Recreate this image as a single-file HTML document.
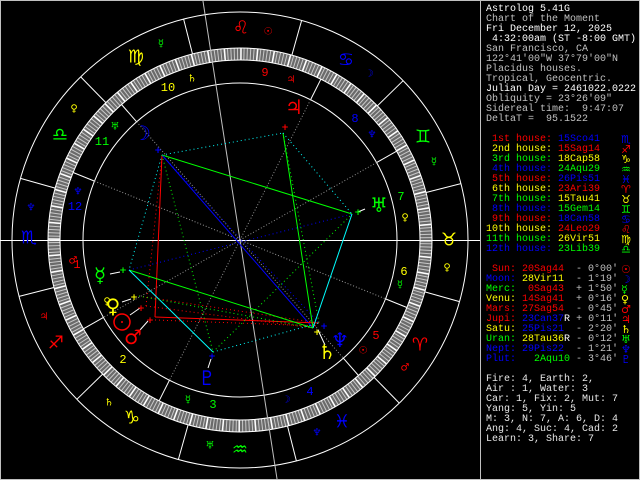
<!DOCTYPE html>
<html><head><meta charset="utf-8"><style>
html,body{margin:0;padding:0;background:#000}
#w{position:relative;width:640px;height:480px;background:#000;overflow:hidden}
svg{position:absolute;left:0;top:0}
#p{position:absolute;left:486px;top:5px;width:150px;font:10px/10px "Liberation Mono","DejaVu Sans Mono",monospace;color:#c0c0c0;white-space:normal}
#p div{height:10px;white-space:pre}
.w{color:#fff}.r{color:#f00}.y{color:#ff0}.g{color:#0f0}.b{color:#00f}.l{color:#e8e8e8}
.gl{position:absolute;left:135px;font-family:"DejaVu Sans",sans-serif;font-size:11px;line-height:10px}
</style></head><body><div id="w">
<svg width="640" height="480" viewBox="0 0 640 480" font-family="DejaVu Sans, sans-serif">
<rect x="0.5" y="0.5" width="639" height="479" fill="none" stroke="#c0c0c0"/>
<line x1="480.5" y1="0" x2="480.5" y2="480" stroke="#c0c0c0"/>
<g fill="none">
<circle cx="240" cy="240" r="228" stroke="#fff"/>
<circle cx="240" cy="240" r="186" stroke="#6a6a6a" stroke-width="12"/>
<circle cx="240" cy="240" r="186" stroke="#c8c8c8" stroke-width="12" stroke-dasharray="1 2.246"/>
<circle cx="240" cy="240" r="186" stroke="#fff" stroke-width="12" stroke-dasharray="1.5 14.73"/>
<circle cx="240" cy="240" r="192" stroke="#fff"/>
<circle cx="240" cy="240" r="180" stroke="#fff"/>
<circle cx="240" cy="240" r="157" stroke="#fff"/>
</g>
<g stroke="#fff">
<line x1="432" y1="240" x2="468" y2="240" transform="rotate(45.68 240 240)"/>
<line x1="432" y1="240" x2="468" y2="240" transform="rotate(15.68 240 240)"/>
<line x1="432" y1="240" x2="468" y2="240" transform="rotate(-14.32 240 240)"/>
<line x1="432" y1="240" x2="468" y2="240" transform="rotate(-44.32 240 240)"/>
<line x1="432" y1="240" x2="468" y2="240" transform="rotate(-74.32 240 240)"/>
<line x1="432" y1="240" x2="468" y2="240" transform="rotate(-104.32 240 240)"/>
<line x1="432" y1="240" x2="468" y2="240" transform="rotate(-134.32 240 240)"/>
<line x1="432" y1="240" x2="468" y2="240" transform="rotate(-164.32 240 240)"/>
<line x1="432" y1="240" x2="468" y2="240" transform="rotate(-194.32 240 240)"/>
<line x1="432" y1="240" x2="468" y2="240" transform="rotate(-224.32 240 240)"/>
<line x1="432" y1="240" x2="468" y2="240" transform="rotate(-254.32 240 240)"/>
<line x1="432" y1="240" x2="468" y2="240" transform="rotate(-284.32 240 240)"/>
<line x1="397" y1="240" x2="420" y2="240" transform="rotate(-209.55 240 240)"/>
<line x1="397" y1="240" x2="420" y2="240" transform="rotate(-243.29 240 240)"/>
<line x1="397" y1="240" x2="420" y2="240" transform="rotate(-311.17 240 240)"/>
<line x1="397" y1="240" x2="420" y2="240" transform="rotate(-337.97 240 240)"/>
<line x1="397" y1="240" x2="420" y2="240" transform="rotate(-29.55 240 240)"/>
<line x1="397" y1="240" x2="420" y2="240" transform="rotate(-63.29 240 240)"/>
<line x1="397" y1="240" x2="420" y2="240" transform="rotate(-131.17 240 240)"/>
<line x1="397" y1="240" x2="420" y2="240" transform="rotate(-157.97 240 240)"/>
</g>
<g stroke="#909090" stroke-dasharray="1 2">
<line x1="83" y1="240" x2="397" y2="240" transform="rotate(-209.55 240 240)"/>
<line x1="83" y1="240" x2="397" y2="240" transform="rotate(-243.29 240 240)"/>
<line x1="83" y1="240" x2="397" y2="240" transform="rotate(-311.17 240 240)"/>
<line x1="83" y1="240" x2="397" y2="240" transform="rotate(-337.97 240 240)"/>
</g>
<line x1="0" y1="240.5" x2="480" y2="240.5" stroke="#fff"/>
<line x1="202.5" y1="-2" x2="277.5" y2="482" stroke="#c0c0c0"/>
<g stroke-width="1" fill="none">
<line x1="162" y1="155" x2="283" y2="133" stroke="#0ff" stroke-dasharray="1 3"/>
<line x1="162" y1="155" x2="129" y2="270" stroke="#0ff" stroke-dasharray="1 3"/>
<line x1="162" y1="155" x2="352" y2="214" stroke="#0f0"/>
<line x1="162" y1="155" x2="313" y2="328" stroke="#00f"/>
<line x1="162" y1="155" x2="319" y2="323" stroke="#00f" stroke-dasharray="1 3"/>
<polyline points="162,155 155,317" stroke="#f00"/>
<line x1="155" y1="317" x2="319" y2="323" stroke="#f00"/>
<line x1="146" y1="306" x2="162" y2="155" stroke="#f00" stroke-dasharray="1 3"/>
<line x1="146" y1="306" x2="313" y2="328" stroke="#f00" stroke-dasharray="1 3"/>
<line x1="139" y1="296" x2="319" y2="323" stroke="#f00" stroke-dasharray="1 3"/>
<line x1="162" y1="155" x2="213" y2="352" stroke="#0f0" stroke-dasharray="1 3"/>
<line x1="129" y1="270" x2="313" y2="328" stroke="#0f0"/>
<line x1="129" y1="270" x2="352" y2="214" stroke="#00f" stroke-dasharray="1 3"/>
<line x1="129" y1="270" x2="213" y2="352" stroke="#0ff"/>
<line x1="283" y1="133" x2="313" y2="328" stroke="#0f0"/>
<line x1="283" y1="133" x2="319" y2="323" stroke="#0f0" stroke-dasharray="1 3"/>
<line x1="283" y1="133" x2="352" y2="214" stroke="#0ff" stroke-dasharray="1 3"/>
<line x1="352" y1="214" x2="313" y2="328" stroke="#0ff"/>
<line x1="213" y1="352" x2="319" y2="323" stroke="#0ff" stroke-dasharray="1 3"/>
<line x1="213" y1="352" x2="352" y2="214" stroke="#0f0" stroke-dasharray="1 3"/>
<line x1="139" y1="296" x2="313" y2="328" stroke="#0f0" stroke-dasharray="1 3"/>
<line x1="155" y1="320" x2="319" y2="326" stroke="#f00" stroke-dasharray="1 3"/>
</g>
<g stroke="#fff">
<line x1="110" y1="274" x2="120" y2="272"/>
<line x1="122" y1="302" x2="131" y2="299"/>
<line x1="130" y1="315" x2="140" y2="308"/>
<line x1="140" y1="330" x2="148" y2="321"/>
<line x1="318" y1="330" x2="325" y2="345"/>
<line x1="208" y1="368" x2="211" y2="359"/>
<line x1="365" y1="209" x2="358" y2="212"/>
</g>
<g font-size="9" text-anchor="middle" dominant-baseline="central" font-weight="bold">
<text x="141" y="309" fill="#f00">+</text><text x="158" y="151" fill="#00f">+</text>
<text x="123" y="271" fill="#0f0">+</text><text x="134" y="298" fill="#ff0">+</text>
<text x="150" y="321" fill="#f00">+</text><text x="285" y="128" fill="#f00">+</text>
<text x="317" y="333" fill="#ff0">+</text><text x="358" y="213" fill="#0f0">+</text>
<text x="324" y="327" fill="#00f">+</text><text x="212" y="357" fill="#00f">+</text>
</g>
<g font-size="20" text-anchor="middle" dominant-baseline="central">
<text x="142" y="133" fill="#00f">☽</text>
<text x="100" y="275" fill="#0f0">☿</text>
<text x="113" y="306" fill="#ff0">♀</text>
<text x="133" y="337" fill="#f00">♂</text>
<text x="294" y="107" fill="#f00">♃</text>
<text x="327" y="352" fill="#ff0">♄</text>
<text x="340" y="340" fill="#00f">♆</text>
<text x="379" y="205" fill="#0f0">♅</text>
<text x="207" y="378" fill="#00f">♇</text>
</g>
<circle cx="122" cy="322" r="8" fill="none" stroke="#f00" stroke-width="1.5"/><circle cx="122" cy="322" r="1" fill="#f00"/>
<g font-size="18" text-anchor="middle" dominant-baseline="central">
<text x="420" y="345" fill="#f00">♈</text>
<text x="449" y="240" fill="#ff0">♉</text>
<text x="423" y="137" fill="#0f0">♊</text>
<text x="346" y="60" fill="#00f">♋</text>
<text x="241" y="28" fill="#f00">♌</text>
<text x="136" y="57" fill="#ff0">♍</text>
<text x="60" y="135" fill="#0f0">♎</text>
<text x="29" y="238" fill="#00f">♏</text>
<text x="56" y="343" fill="#f00">♐</text>
<text x="132" y="418" fill="#ff0">♑</text>
<text x="240" y="450" fill="#0f0">♒</text>
<text x="342" y="422" fill="#00f">♓</text>
</g>
<g font-size="10" text-anchor="middle" dominant-baseline="central">
<text x="268" y="32" fill="#f00">☉</text><text x="161" y="44" fill="#0f0">☿</text>
<text x="74" y="109" fill="#ff0">♀</text><text x="31" y="208" fill="#00f">♆</text>
<text x="44" y="317" fill="#f00">♃</text><text x="109" y="403" fill="#ff0">♄</text>
<text x="210" y="446" fill="#0f0">♅</text><text x="317" y="433" fill="#00f">♆</text>
<text x="405" y="368" fill="#f00">♂</text><text x="447" y="268" fill="#ff0">♀</text>
<text x="434" y="162" fill="#0f0">☿</text><text x="369" y="74" fill="#00f">☽</text>
<text x="192" y="79" fill="#ff0">♄</text><text x="115" y="127" fill="#0f0">♅</text>
<text x="78" y="192" fill="#00f">♆</text><text x="73" y="261" fill="#f00">♂</text>
<text x="107" y="302" fill="#ff0">♀</text><text x="188" y="400" fill="#0f0">☿</text>
<text x="286" y="400" fill="#00f">☽</text><text x="363" y="351" fill="#f00">☉</text>
<text x="400" y="285" fill="#0f0">☿</text><text x="405" y="218" fill="#ff0">♀</text>
<text x="372" y="135" fill="#00f">♆</text><text x="291" y="80" fill="#f00">♃</text>
</g>
<g font-family="Liberation Mono, monospace" font-size="12" text-anchor="middle" dominant-baseline="central">
<text x="77" y="265" fill="#f00">1</text><text x="123" y="360" fill="#ff0">2</text>
<text x="213" y="405" fill="#0f0">3</text><text x="310" y="392" fill="#00f">4</text>
<text x="376" y="336" fill="#f00">5</text><text x="404" y="272" fill="#ff0">6</text>
<text x="401" y="197" fill="#0f0">7</text><text x="355" y="119" fill="#00f">8</text>
<text x="265" y="73" fill="#f00">9</text><text x="168" y="88" fill="#ff0">10</text>
<text x="102" y="142" fill="#0f0">11</text><text x="75" y="207" fill="#00f">12</text>
</g>
</svg>
<div id="p"><div class="w">Astrolog 5.41G</div><div>Chart of the Moment</div><div class="w">Fri December 12, 2025</div><div class="w"> 4:32:00am (ST -8:00 GMT)</div><div>San Francisco, CA</div><div>122°41'00"W 37°79'00"N</div><div>Placidus houses.</div><div>Tropical, Geocentric.</div><div class="w">Julian Day = 2461022.0222</div><div>Obliquity = 23°26'09"</div><div>Sidereal time:  9:47:07</div><div>DeltaT =  95.1522</div><div></div><div><span class="r"> 1st house:</span> <span class="b">15Sco41</span></div><div><span class="y"> 2nd house:</span> <span class="r">15Sag14</span></div><div><span class="g"> 3rd house:</span> <span class="y">18Cap58</span></div><div><span class="b"> 4th house:</span> <span class="g">24Aqu29</span></div><div><span class="r"> 5th house:</span> <span class="b">26Pis51</span></div><div><span class="y"> 6th house:</span> <span class="r">23Ari39</span></div><div><span class="g"> 7th house:</span> <span class="y">15Tau41</span></div><div><span class="b"> 8th house:</span> <span class="g">15Gem14</span></div><div><span class="r"> 9th house:</span> <span class="b">18Can58</span></div><div><span class="y">10th house:</span> <span class="r">24Leo29</span></div><div><span class="g">11th house:</span> <span class="y">26Vir51</span></div><div><span class="b">12th house:</span> <span class="g">23Lib39</span></div><div></div><div><span class="r"> Sun:</span> <span class="r">20Sag44</span>  - 0°00'</div><div><span class="b">Moon:</span> <span class="y">28Vir11</span>  - 1°19'</div><div><span class="g">Merc:</span> <span class="r"> 0Sag43</span>  + 1°50'</div><div><span class="y">Venu:</span> <span class="r">14Sag41</span>  + 0°16'</div><div><span class="r">Mars:</span> <span class="r">27Sag54</span>  - 0°45'</div><div><span class="r">Jupi:</span> <span class="b">23Can37</span><span class="w">R</span> + 0°11'</div><div><span class="y">Satu:</span> <span class="b">25Pis21</span>  - 2°20'</div><div><span class="g">Uran:</span> <span class="y">28Tau36</span><span class="w">R</span> - 0°12'</div><div><span class="b">Nept:</span> <span class="b">29Pis22</span>  - 1°21'</div><div><span class="b">Plut:</span> <span class="g">  2Aqu10</span> - 3°46'</div><div></div><div class="l">Fire: 4, Earth: 2,</div><div class="l">Air : 1, Water: 3</div><div class="l">Car: 1, Fix: 2, Mut: 7</div><div class="l">Yang: 5, Yin: 5</div><div class="l">M: 3, N: 7, A: 6, D: 4</div><div class="l">Ang: 4, Suc: 4, Cad: 2</div><div class="l">Learn: 3, Share: 7</div><span class="gl b" style="top:130px">♏</span><span class="gl r" style="top:140px">♐</span><span class="gl y" style="top:150px">♑</span><span class="gl g" style="top:160px">♒</span><span class="gl b" style="top:170px">♓</span><span class="gl r" style="top:180px">♈</span><span class="gl y" style="top:190px">♉</span><span class="gl g" style="top:200px">♊</span><span class="gl b" style="top:210px">♋</span><span class="gl r" style="top:220px">♌</span><span class="gl y" style="top:230px">♍</span><span class="gl g" style="top:240px">♎</span><span class="gl r" style="top:260px">☉</span><span class="gl b" style="top:270px">☽</span><span class="gl g" style="top:280px">☿</span><span class="gl y" style="top:290px">♀</span><span class="gl r" style="top:300px">♂</span><span class="gl r" style="top:310px">♃</span><span class="gl y" style="top:320px">♄</span><span class="gl g" style="top:330px">♅</span><span class="gl b" style="top:340px">♆</span><span class="gl b" style="top:350px">♇</span></div>
</div></body></html>
